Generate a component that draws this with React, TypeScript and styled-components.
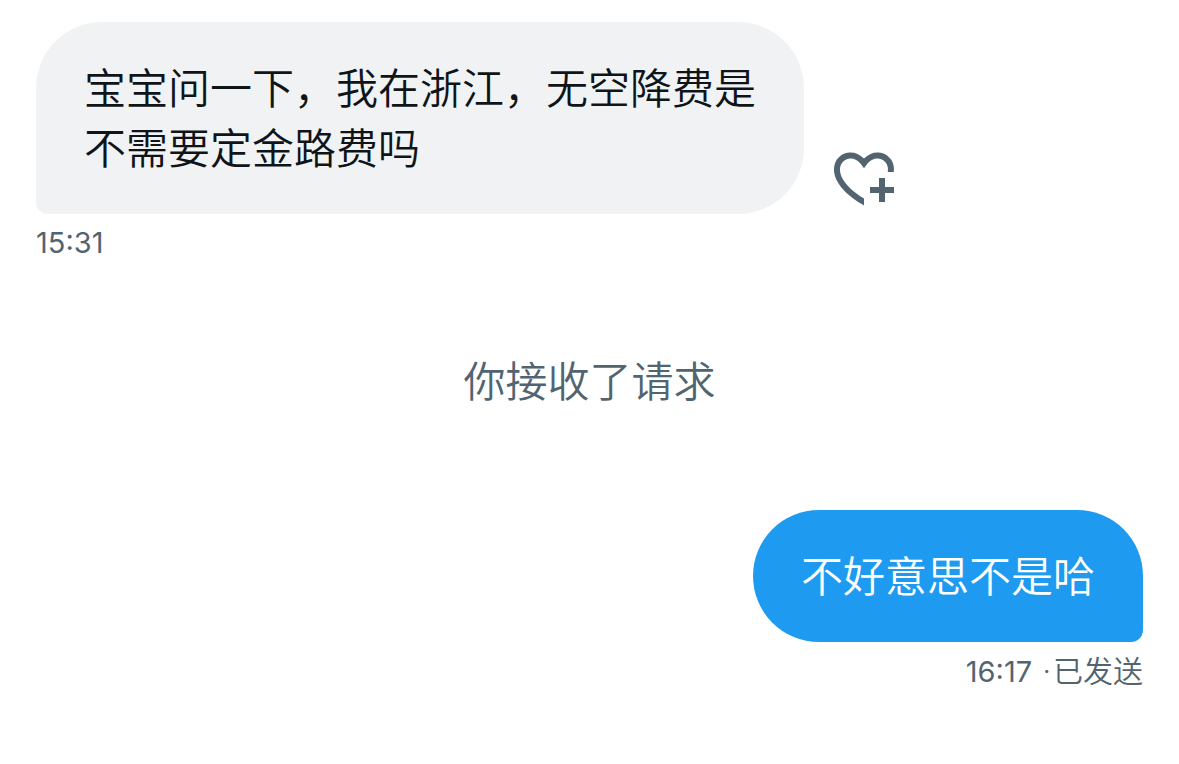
import React from "react";
import styled, { createGlobalStyle } from "styled-components";

const GlobalStyle = createGlobalStyle`
  * { box-sizing: border-box; }
  body {
    margin: 0;
    background: #ffffff;
    font-family: Inter, "Noto Sans CJK SC", sans-serif;
  }
`;

type Side = "received" | "sent";

const Conversation = styled.main`
  display: flex;
  flex-direction: column;
  padding: 22px 36px;
`;

const Message = styled.article<{ $side: Side }>`
  display: flex;
  flex-direction: column;
  align-items: ${(p) => (p.$side === "sent" ? "flex-end" : "flex-start")};
`;

const BubbleRow = styled.div`
  display: flex;
  align-items: flex-end;
  gap: 24px;
`;

const Bubble = styled.p<{ $side: Side }>`
  margin: 0;
  max-width: 768px;
  padding: 34px 48px 38px;
  border-radius: ${(p) => (p.$side === "sent" ? "66px 66px 12px 66px" : "66px 66px 66px 12px")};
  background: ${(p) => (p.$side === "sent" ? "#1e9bf1" : "#f0f2f4")};
  color: ${(p) => (p.$side === "sent" ? "#ffffff" : "#0f1419")};
  font-family: "Noto Sans CJK SC", sans-serif;
  font-weight: 350;
  font-size: 42px;
  line-height: 60px;
`;

const ReactButton = styled.button`
  flex: none;
  display: flex;
  padding: 0;
  border: 0;
  background: none;
  color: #536471;
  cursor: pointer;
`;

const Meta = styled.div`
  display: flex;
  align-items: baseline;
  gap: 2px;
  margin-top: 11px;
  color: #536471;
  font-size: 30px;
  font-weight: 350;
  line-height: 36px;
  white-space: pre;
`;

const Time = styled.time`
  font-size: 29px;
  font-weight: 400;
`;

const Notice = styled.p`
  margin: 88px 0 101px;
  color: #536471;
  font-family: "Noto Sans CJK SC", sans-serif;
  font-weight: 350;
  font-size: 42px;
  line-height: 60px;
  text-align: center;
`;

const HeartPlusIcon = () => (
  <svg width="72" height="72" viewBox="0 0 24 24" fill="currentColor" aria-hidden="true">
    <path d="M17 12v3h-2.998v2h3v3h2v-3h3v-2h-3.001v-3H17zm-5 6.839c-3.871-2.34-6.053-4.639-7.127-6.609-1.112-2.04-1.031-3.7-.479-4.82.561-1.13 1.667-1.84 2.91-1.91 1.222-.06 2.68.51 3.892 2.16l.806 1.09.805-1.09c1.211-1.65 2.668-2.22 3.89-2.16 1.242.07 2.347.78 2.908 1.91.334.677.49 1.554.321 2.59h2.011c.153-1.283-.039-2.469-.539-3.48-.887-1.79-2.647-2.91-4.601-3.01-1.65-.09-3.367.56-4.796 2.01-1.43-1.45-3.147-2.1-4.798-2.01-1.954.1-3.714 1.22-4.601 3.01-.896 1.81-.846 4.17.514 6.67 1.353 2.48 4.003 5.12 8.382 7.67l.502.299v-2.32z" />
  </svg>
);

export default function App() {
  return (
    <>
      <GlobalStyle />
      <Conversation lang="zh-CN">
        <Message $side="received">
          <BubbleRow>
            <Bubble $side="received">宝宝问一下，我在浙江，无空降费是不需要定金路费吗</Bubble>
            <ReactButton type="button" aria-label="添加回应">
              <HeartPlusIcon />
            </ReactButton>
          </BubbleRow>
          <Meta><Time>15:31</Time></Meta>
        </Message>
        <Notice>你接收了请求</Notice>
        <Message $side="sent">
          <Bubble $side="sent">不好意思不是哈</Bubble>
          <Meta>
            <Time>16:17</Time>
            <span>{" ·"}</span>
            <span>已发送</span>
          </Meta>
        </Message>
      </Conversation>
    </>
  );
}
